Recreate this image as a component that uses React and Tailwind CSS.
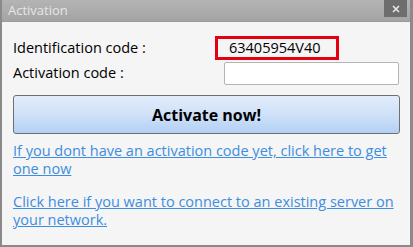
export default function App() {
  return (
    <div
      className="w-[413px] h-[247px] flex flex-col bg-[#f5f5f5] border-l-2 border-r-[3px] border-b-2 border-[#8a8a8a] overflow-hidden"
      style={{ fontFamily: '"Open Sans", "Noto Sans", sans-serif' }}
    >
      {/* Title bar */}
      <div className="h-[22px] shrink-0 flex items-start justify-between bg-gradient-to-b from-[#b4b4b4] to-[#a4a4a4] border-b border-[#9a9a9a]">
        <span className="pl-[6px] pt-[2px] text-[13px] leading-[16px] text-[#e6e6e6]">Activation</span>
        <button className="w-[23px] h-[17px] mr-[3px] flex items-center justify-center bg-[#6e6e6e]">
          <svg width="8" height="8" viewBox="0 0 8 8">
            <path d="M1 1L7 7M7 1L1 7" stroke="#e8e8e8" strokeWidth="1.6" />
          </svg>
        </button>
      </div>

      {/* Body */}
      <div className="flex-1 px-[11px] pt-[14px]">
        <div className="flex items-center h-[24px]">
          <span className="w-[202px] text-[14.5px] text-black">Identification code :</span>
          <div className="w-[124px] h-[24px] border-[3px] border-[#e4000f] flex items-center pl-[11px] text-[14.5px] text-black">
            63405954V40
          </div>
        </div>
        <div className="flex items-center h-[24px] mt-[1px]">
          <span className="w-[212px] text-[14.5px] text-black">Activation code :</span>
          <input
            type="text"
            className="w-[175px] h-[23px] bg-white border border-[#b4b4b4] rounded-[2px] outline-none"
          />
        </div>

        <button className="mt-[10px] w-[387px] h-[39px] rounded-[3px] border border-[#6f6f6f] bg-gradient-to-b from-[#e2edfb] via-[#cfe1f8] to-[#b3d0f5] text-[16px] font-bold text-black">
          Activate now!
        </button>

        <a href="#" className="block mt-[8px] text-[14.5px] leading-[18px] text-[#3d8de0] underline">
          If you dont have an activation code yet, click here to get one now
        </a>

        <a href="#" className="block mt-[15px] text-[14.5px] leading-[18px] text-[#3d8de0] underline">
          Click here if you want to connect to an existing server on your network.
        </a>
      </div>
    </div>
  );
}
